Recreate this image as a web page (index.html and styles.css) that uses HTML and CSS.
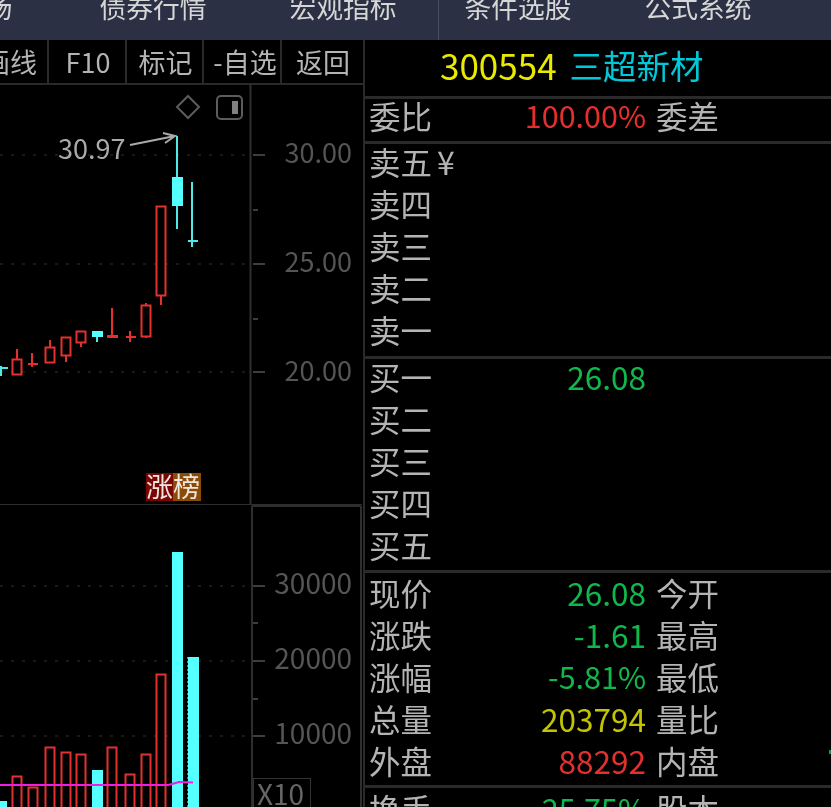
FILE: index.html
```html
<!DOCTYPE html>
<html lang="zh-CN">
<head>
  <meta charset="UTF-8" />
  <title>三超新材 300554</title>
  <link rel="stylesheet" href="styles.css">
</head>
<body>
  <div class="menu">
    <div class="menu-group">
      <span class="menu-first">市场</span>
      <span>债券行情</span>
      <span>宏观指标</span>
    </div>
    <div class="menu-group menu-group-right">
      <span>条件选股</span>
      <span>公式系统</span>
    </div>
  </div>

  <div class="main">
    <div class="left">
      <div class="toolbar">
        <div class="tool tool-first">画线</div>
        <div class="tool">F10</div>
        <div class="tool tool-narrow">标记</div>
        <div class="tool tool-shift">-自选</div>
        <div class="tool tool-last">返回</div>
      </div>

      <svg class="price-pane" width="362" height="419" viewBox="0 85 362 419">
        <g class="grid">
          <line x1="0" y1="155" x2="248" y2="155"/>
          <line x1="0" y1="264" x2="248" y2="264"/>
          <line x1="0" y1="372" x2="248" y2="372"/>
        </g>
        <line class="axis" x1="250.500" y1="85" x2="250.500" y2="504"/>
        <g class="tick">
          <line x1="253" y1="155" x2="265" y2="155"/>
          <line x1="253" y1="264" x2="265" y2="264"/>
          <line x1="253" y1="372" x2="265" y2="372"/>
          <line x1="253" y1="210" x2="258" y2="210"/>
          <line x1="253" y1="319" x2="258" y2="319"/>
        </g>
        <g class="axis-label axis-label-price">
          <text x="352" y="163" text-anchor="end">30.00</text>
          <text x="352" y="272" text-anchor="end">25.00</text>
          <text x="352" y="381" text-anchor="end">20.00</text>
        </g>

        <path class="icon" d="M188 96 L199 107 L188 118 L177 107 Z"/>
        <rect class="icon" x="217" y="96" width="25" height="23" rx="4"/>
        <rect class="icon-fill" x="232" y="101" width="6" height="13"/>

        <g class="up">
          <path d="M17 349V359M32 353V367M28 364H38M50 340V347M66 355V362M81 342V347M112 308V336M130 331V342M126 337H136M146 303V305M146 336V338M161 295V305"/>
          <rect x="12.500" y="359.500" width="9" height="15"/>
          <rect x="45.500" y="347.500" width="9" height="15"/>
          <rect x="61.500" y="337.500" width="9" height="18"/>
          <rect x="76.500" y="331.500" width="9" height="11"/>
          <rect class="solid" x="107" y="335" width="11" height="3"/>
          <rect x="141.500" y="305.500" width="9" height="31"/>
          <rect x="156.500" y="206.500" width="9" height="89"/>
        </g>
        <g class="down">
          <path d="M0 368H8M1 366V376M97 337V342M177 136V229M192 182V247M188 241H198"/>
          <rect x="92" y="331" width="11" height="6"/>
          <rect x="172" y="177" width="11" height="29"/>
        </g>

        <text class="high" x="58" y="159">30.97</text>
        <path class="arrow" d="M130 145 L175 136 M163 133 L175 136 L165 143"/>

        <rect class="tag-red" x="146" y="473" width="27" height="28"/>
        <rect class="tag-brown" x="173" y="473" width="28" height="28"/>
        <text class="tag-text" x="146" y="497">涨榜</text>
      </svg>

      <svg class="volume-pane" width="362" height="303" viewBox="0 504 362 303">
        <line class="axis" x1="0" y1="504" x2="362" y2="504"/>
        <line class="axis" x1="252" y1="506" x2="361" y2="506"/>
        <line class="axis" x1="252" y1="506" x2="252" y2="807"/>
        <line class="axis" x1="361" y1="506" x2="361" y2="807"/>
        <g class="grid">
          <line x1="0" y1="586" x2="248" y2="586"/>
          <line x1="0" y1="661" x2="248" y2="661"/>
          <line x1="0" y1="736" x2="248" y2="736"/>
        </g>
        <g class="tick">
          <line x1="253" y1="586" x2="265" y2="586"/>
          <line x1="253" y1="661" x2="265" y2="661"/>
          <line x1="253" y1="736" x2="265" y2="736"/>
          <line x1="253" y1="623" x2="258" y2="623"/>
          <line x1="253" y1="699" x2="258" y2="699"/>
        </g>
        <g class="axis-label">
          <text x="352" y="594" text-anchor="end">30000</text>
          <text x="352" y="669" text-anchor="end">20000</text>
          <text x="352" y="744" text-anchor="end">10000</text>
        </g>

        <g class="up">
          <rect x="12.500" y="776.500" width="9" height="40"/>
          <rect x="28.500" y="787.500" width="9" height="40"/>
          <rect x="45.500" y="747.500" width="9" height="80"/>
          <rect x="61.500" y="752.500" width="9" height="80"/>
          <rect x="76.500" y="754.500" width="9" height="80"/>
          <rect x="107.500" y="747.500" width="9" height="80"/>
          <rect x="125.500" y="774.500" width="9" height="50"/>
          <rect x="141.500" y="754.500" width="9" height="80"/>
          <rect x="156.500" y="674.500" width="9" height="160"/>
        </g>
        <g class="down">
          <rect x="0" y="801" width="7" height="10"/>
          <rect x="92" y="770" width="11" height="40"/>
          <rect x="172" y="552" width="11" height="260"/>
          <rect x="188" y="657" width="11" height="155"/>
        </g>
        <line class="vol-edge" x1="187.500" y1="657" x2="187.500" y2="807"/>
        <path class="avg" d="M0 785 H168 L172 784 L179 782 L193 782.500"/>

        <rect class="x-box" x="253.500" y="778.500" width="57" height="40"/>
        <text class="x-label" x="257" y="805">X10</text>
      </svg>
    </div>

    <div class="right">
      <div class="title">
        <span class="code">300554</span>
        <span class="name">三超新材</span>
      </div>

      <div class="section section-ratio">
        <div class="row"><span class="lbl">委比</span><span class="val pct red">100.00%</span><span class="lbl2">委差</span></div>
      </div>

      <div class="section section-sell">
        <div class="row"><span class="lbl">卖五</span><span class="yen">¥</span></div>
        <div class="row"><span class="lbl">卖四</span></div>
        <div class="row"><span class="lbl">卖三</span></div>
        <div class="row"><span class="lbl">卖二</span></div>
        <div class="row"><span class="lbl">卖一</span></div>
      </div>

      <div class="section section-buy">
        <div class="row"><span class="lbl">买一</span><span class="val green">26.08</span></div>
        <div class="row"><span class="lbl">买二</span></div>
        <div class="row"><span class="lbl">买三</span></div>
        <div class="row"><span class="lbl">买四</span></div>
        <div class="row"><span class="lbl">买五</span></div>
      </div>

      <div class="section section-stat">
        <div class="row"><span class="lbl">现价</span><span class="val green">26.08</span><span class="lbl2">今开</span></div>
        <div class="row"><span class="lbl">涨跌</span><span class="val green">-1.61</span><span class="lbl2">最高</span></div>
        <div class="row"><span class="lbl">涨幅</span><span class="val pct green">-5.81%</span><span class="lbl2">最低</span></div>
        <div class="row"><span class="lbl">总量</span><span class="val yellow">203794</span><span class="lbl2">量比</span></div>
        <div class="row"><span class="lbl">外盘</span><span class="val red">88292</span><span class="lbl2">内盘</span><span class="edge-mark"></span></div>
      </div>

      <div class="section section-last">
        <div class="row"><span class="lbl">换手</span><span class="val pct green">25.75%</span><span class="lbl2">股本</span></div>
      </div>
    </div>
  </div>
</body>
</html>
```

FILE: styles.css
```css
* { box-sizing: border-box; }
html, body { margin: 0; height: 807px; overflow: hidden; background: #000; }
body { font-family: "Noto Sans CJK SC", "Noto Sans", sans-serif; width: 831px; }

/* the reference is an upscaled capture, everything is a little soft */
.menu, .main { filter: blur(0.4px); }

.menu { height: 40px; background: #2b3044; color: #d6d6d6; font-size: 26.75px; line-height: 28px; display: flex; overflow: hidden; }
.menu-group { display: flex; gap: 83px; margin-top: -7px; height: 48px; }
.menu-group:first-child { margin-left: -41px; }
.menu-first { margin-right: 4px; }
.menu-group-right { gap: 73px; margin-left: 41px; padding-left: 27px; position: relative; }
.menu-group-right::before { content: ""; position: absolute; left: 0; top: 7px; width: 1px; height: 40px; background: #4a4f60; }

.main { display: flex; height: 767px; }
.left { width: 363px; flex: none; }
.right { flex: 1; border-left: 2px solid #2a2a2a; min-width: 0; }

.toolbar { display: flex; height: 45px; border-bottom: 2px solid #2a2a2a; color: #b4b4b4; font-size: 27px; line-height: 43px; }
.tool { width: 78px; padding-left: 2px; text-align: center; border-right: 2px solid #2a2a2a; flex: none; white-space: nowrap; }
.tool-first { width: 49px; padding: 0 10px 0 0; text-align: right; direction: rtl; overflow: hidden; }
.tool-narrow { width: 77px; }
.tool-shift { padding-left: 6px; }
.tool-last { width: 80px; border-right: 0; }

svg { display: block; }
.price-pane, .volume-pane { font-family: "Noto Sans CJK SC", "Noto Sans", sans-serif; }
.grid line { stroke: #333; stroke-width: 1; stroke-dasharray: 3 8; }
.axis { stroke: #2e2e2e; stroke-width: 2; }
.tick line { stroke: #3e3e3e; stroke-width: 2; }
.axis-label text { fill: #555; font-size: 28px; }
.axis-label-price text { font-size: 27px; }
.icon { fill: none; stroke: #5c5c5c; stroke-width: 2; }
.icon-fill { fill: #808080; }
.up { fill: none; stroke: #e4312d; stroke-width: 2; }
.up .solid { fill: #e4312d; stroke: none; }
.down path { fill: none; stroke: #4de8e8; stroke-width: 2; }
.down rect { fill: #54ffff; }
.high { fill: #aaa; font-size: 27px; }
.arrow { fill: none; stroke: #aaa; stroke-width: 2; }
.tag-red { fill: #7a0505; }
.tag-brown { fill: #8a4a08; }
.tag-text { fill: #f0e6dc; font-size: 27px; }
.vol-edge { stroke: #7d8a20; stroke-width: 1; stroke-dasharray: 2 2; }
.avg { fill: none; stroke: #f01ee0; stroke-width: 2; }
.x-box { fill: none; stroke: #333; stroke-width: 1; }
.x-label { fill: #666; font-size: 28px; }

.title { height: 59px; border-bottom: 3px solid #2a2a2a; padding: 0 0 6px 75px; display: flex; align-items: center; gap: 13px; line-height: 50px; }
.code { color: #eaea00; font-size: 35px; }
.name { color: #00c8d8; font-size: 33.500px; }

.section { display: flow-root; border-bottom: 3px solid #2a2a2a; padding-left: 4px; color: #b4b4b4; }
.section-ratio { height: 45px; }
.section-ratio .row { height: 32px; line-height: 32px; }
.section-sell { height: 215px; }
.section-buy { height: 214px; }
.section-stat { height: 215px; }
.section-sell .row:first-child, .section-buy .row:first-child { margin-top: -4px; }
.section-stat .row:first-child { margin-top: -2px; }
.section-last { border-bottom: 0; }
.section-last .row { margin-top: -1px; }

.row { display: flex; height: 42px; line-height: 42px; font-size: 31.500px; white-space: nowrap; }
.lbl { width: 62px; flex: none; }
.lbl2 { width: 62px; flex: none; margin-left: 10px; }
.val { width: 215px; flex: none; text-align: right; }
.pct { font-size: 30.500px; }
.yen { margin-left: 6px; font-size: 32px; }
.edge-mark { width: 2px; height: 4px; background: #0c9a40; margin: 11px 0 0 111px; }

.red { color: #e4302c; }
.green { color: #0fb84a; }
.yellow { color: #c4c400; }
```
